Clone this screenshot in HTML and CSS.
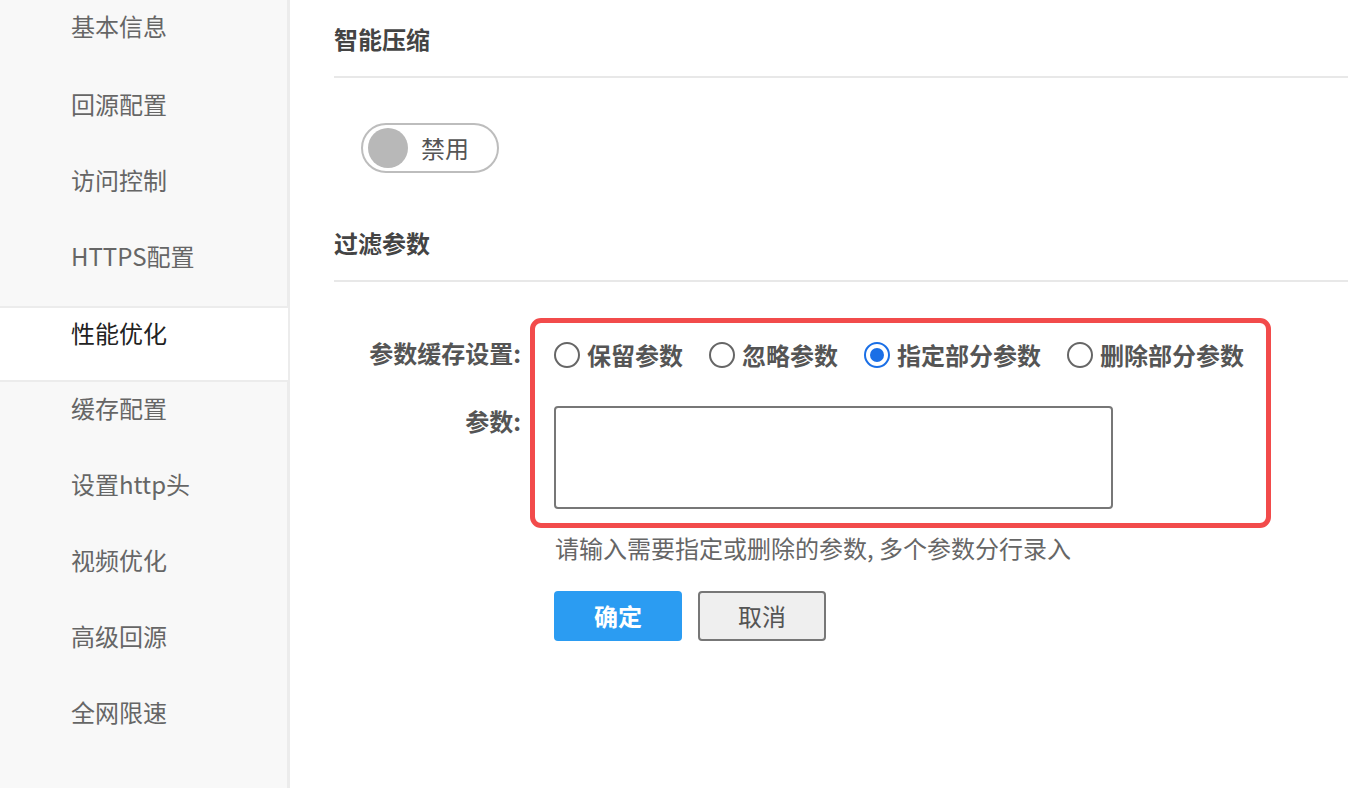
FILE: index.html
```html
<!DOCTYPE html>
<html lang="zh-CN">
<head>
<meta charset="utf-8">
<title>性能优化</title>
<link rel="stylesheet" href="styles.css">
</head>
<body>
<div class="page">
  <aside class="sidebar">
    <div class="nav-item">基本信息</div>
    <div class="nav-item">回源配置</div>
    <div class="nav-item">访问控制</div>
    <div class="nav-item">HTTPS配置</div>
    <div class="nav-item active">性能优化</div>
    <div class="nav-item">缓存配置</div>
    <div class="nav-item">设置http头</div>
    <div class="nav-item">视频优化</div>
    <div class="nav-item">高级回源</div>
    <div class="nav-item">全网限速</div>
  </aside>
  <main class="main">
    <section class="section">
      <h2 class="section-title">智能压缩</h2>
      <div class="section-body toggle-body">
        <div class="toggle">
          <span class="toggle-knob"></span>
          <span class="toggle-text">禁用</span>
        </div>
      </div>
    </section>
    <section class="section">
      <h2 class="section-title">过滤参数</h2>
      <div class="form">
        <div class="highlight"></div>
        <div class="form-label label-first">参数缓存设置:</div>
        <div class="form-field radios">
          <label class="radio"><span class="radio-dot"></span><span class="radio-text">保留参数</span></label>
          <label class="radio"><span class="radio-dot"></span><span class="radio-text">忽略参数</span></label>
          <label class="radio checked"><span class="radio-dot"></span><span class="radio-text">指定部分参数</span></label>
          <label class="radio"><span class="radio-dot"></span><span class="radio-text">删除部分参数</span></label>
        </div>
        <div class="form-label label-second">参数:</div>
        <div class="form-field">
          <textarea class="textarea"></textarea>
        </div>
        <div class="form-spacer"></div>
        <div class="form-field">
          <p class="hint">请输入需要指定或删除的参数, 多个参数分行录入</p>
          <div class="actions">
            <button class="btn btn-primary">确定</button>
            <button class="btn btn-default">取消</button>
          </div>
        </div>
      </div>
    </section>
  </main>
</div>
</body>
</html>
```

FILE: styles.css
```css
* { box-sizing: border-box; }
html, body { margin: 0; padding: 0; }
body {
  font-family: "Noto Sans CJK SC", "Noto Sans", sans-serif;
  font-size: 24px;
  color: #444;
  background: #fff;
}
.page {
  display: flex;
  width: 1348px;
  height: 788px;
  overflow: hidden;
}
.sidebar {
  width: 290px;
  flex: none;
  background: #f8f8f8;
  border-right: 3px solid #ececec;
  padding-top: 0;
}
.nav-item {
  height: 76px;
  padding: 8px 0 0 71px;
  line-height: 32px;
  color: #666;
  border-top: 2px solid transparent;
  border-bottom: 2px solid transparent;
  margin-right: -1px;
}
.nav-item:first-child { height: 78px; }
.nav-item.active {
  background: #fff;
  color: #222;
  border-top-color: #ececec;
  border-bottom-color: #ececec;
  padding-top: 9px;
}
.main {
  flex: 1;
  padding-left: 44px;
}
.section-title {
  margin: 0;
  font-size: 24px;
  font-weight: 700;
  color: #444;
  line-height: 32px;
  padding-top: 24px;
  padding-bottom: 21px;
  border-bottom: 2px solid #e8e8e8;
}
.section:first-child .section-title { padding-top: 23px; }
.toggle-body {
  padding: 45px 0 30px 27px;
}
.toggle {
  width: 138px;
  height: 50px;
  border: 2px solid #bdbdbd;
  border-radius: 25px;
  display: flex;
  align-items: center;
  padding-left: 5px;
}
.toggle-knob {
  width: 40px;
  height: 40px;
  border-radius: 50%;
  background: #b8b8b8;
}
.toggle-text {
  margin-left: 13px;
  color: #555;
  line-height: 30px;
}
.form {
  position: relative;
  display: grid;
  grid-template-columns: 196px 1fr;
  margin-top: 37px;
}
.highlight {
  position: absolute;
  left: 196px;
  top: -1px;
  width: 741px;
  height: 210px;
  border: 5px solid #f24b4b;
  border-radius: 11px;
  pointer-events: none;
}
.form-label {
  text-align: right;
  padding-right: 9px;
  font-weight: 700;
  color: #555;
  line-height: 30px;
}
.label-first { padding-top: 19px; }
.label-second { padding-top: 36px; }
.form-field { padding-left: 24px; }
.radios {
  display: flex;
  align-items: center;
  padding-top: 21px;
}
.radio {
  display: flex;
  align-items: center;
  margin-right: 26px;
}
.radio-dot {
  width: 26px;
  height: 26px;
  border: 2px solid #666;
  border-radius: 50%;
  position: relative;
  flex: none;
}
.radio.checked .radio-dot {
  border-color: #1a6fe6;
}
.radio.checked .radio-dot::after {
  content: "";
  position: absolute;
  left: 4px;
  top: 4px;
  width: 14px;
  height: 14px;
  border-radius: 50%;
  background: #1a6fe6;
}
.radio-text {
  margin-left: 7px;
  font-weight: 700;
  color: #555;
  line-height: 30px;
}
.textarea {
  display: block;
  margin-top: 36px;
  width: 559px;
  height: 103px;
  border: 2px solid #777;
  border-radius: 4px;
  resize: none;
  font: inherit;
}
.hint {
  margin: 24px 0 0 1px;
  color: #666;
  line-height: 30px;
}
.actions {
  display: flex;
  gap: 16px;
  margin-top: 28px;
}
.btn {
  width: 128px;
  height: 50px;
  border-radius: 4px;
  font-family: inherit;
  font-size: 24px;
  line-height: 30px;
  padding: 0;
}
.btn-primary {
  background: #2b9cf2;
  border: none;
  color: #fff;
  font-weight: 700;
}
.btn-default {
  background: #efefef;
  border: 2px solid #777;
  color: #555;
}
```
